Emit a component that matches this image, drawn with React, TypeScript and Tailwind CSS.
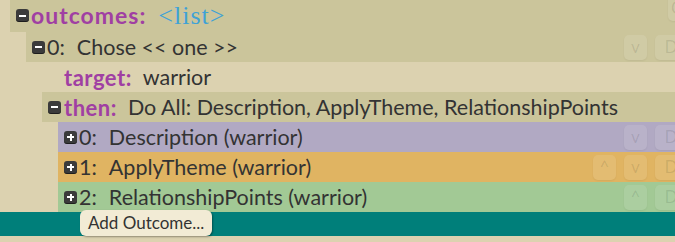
import type { ReactNode } from 'react';

function Toggle({ open }: { open: boolean }) {
  return (
    <span className="relative flex h-[13px] w-[13px] shrink-0 items-center justify-center rounded-[3px] bg-[#3b3b3b] shadow-[inset_0_-1px_0_rgba(0,0,0,0.5)]">
      <span className="absolute h-[2px] w-[7px] bg-white" />
      {!open && <span className="absolute h-[7px] w-[2px] bg-white" />}
    </span>
  );
}

function Btn({ children, className = '' }: { children: ReactNode; className?: string }) {
  return (
    <span
      className={`flex h-[25px] items-center justify-center rounded-[5px] bg-white/10 text-[17px] text-black/10 shadow-[0_1px_2px_rgba(0,0,0,0.06)] ${className}`}
    >
      {children}
    </span>
  );
}

function Row({
  bg = '',
  icon,
  label,
  bold = false,
  value,
  buttons,
}: {
  bg?: string;
  icon?: boolean | null;
  label: string;
  bold?: boolean;
  value?: ReactNode;
  buttons?: ReactNode;
}) {
  return (
    <div className={`flex h-[30px] items-center pl-[6px] ${bg}`}>
      {icon === null ? <span className="w-[13px] shrink-0" /> : <Toggle open={!!icon} />}
      <span
        className={`w-max shrink-0 ${
          bold
            ? 'ml-[3px] text-[22px] font-bold tracking-[0.5px] text-[#a03fa3]'
            : 'ml-[2px] text-[#333]'
        }`}
      >
        {label}
      </span>
      <span className={`whitespace-nowrap ${bold ? 'ml-[11px]' : 'ml-[12px]'}`}>{value}</span>
      <div className="ml-auto flex shrink-0 items-center gap-[8px]">{buttons}</div>
    </div>
  );
}

export default function App() {
  return (
    <div className="h-[242px] w-[675px] overflow-hidden bg-[#dcd2b0] font-['Lato',sans-serif] text-[21.5px] text-[#333]">
      <div className="w-[700px]">
        <div className="ml-[10px]">
          {/* outcomes header */}
          <div className="flex h-[32px] items-start bg-[#cbc59b] pl-[6px]">
            <div className="mt-[9px] flex items-center">
              <Toggle open />
            </div>
            <span className="ml-[2px] mt-[-2px] text-[23px] font-bold tracking-[1px] text-[#a03fa3]">
              outcomes:
            </span>
            <span className="ml-[12px] mt-[-4px] font-['Liberation_Serif',serif] text-[26px] tracking-[1px] text-[#3fa2d6]">
              &lt;list&gt;
            </span>
            <div className="ml-auto mr-[-13px] mt-[-6px] flex">
              <Btn className="h-[27px] w-[45px]">Copy</Btn>
            </div>
          </div>

          <div className="ml-[16px]">
            <Row
              bg="bg-[#cbc59b]"
              icon
              label="0:"
              value="Chose << one >>"
              buttons={
                <>
                  <Btn className="w-[23px]">v</Btn>
                  <Btn className="w-[45px]">Del</Btn>
                </>
              }
            />
            <div className="ml-[16px]">
              <Row icon={null} label="target:" bold value="warrior" />
              <Row
                bg="bg-[#cbc59b]"
                icon
                label="then:"
                bold
                value="Do All: Description, ApplyTheme, RelationshipPoints"
              />
              <div className="ml-[16px]">
                <Row
                  bg="bg-[#b1a9c3]"
                  icon={false}
                  label="0:"
                  value="Description (warrior)"
                  buttons={
                    <>
                      <Btn className="w-[23px]">v</Btn>
                      <Btn className="w-[45px]">Del</Btn>
                    </>
                  }
                />
                <Row
                  bg="bg-[#e0b462]"
                  icon={false}
                  label="1:"
                  value="ApplyTheme (warrior)"
                  buttons={
                    <>
                      <Btn className="w-[23px]">^</Btn>
                      <Btn className="w-[23px]">v</Btn>
                      <Btn className="w-[45px]">Del</Btn>
                    </>
                  }
                />
                <Row
                  bg="bg-[#a2c995]"
                  icon={false}
                  label="2:"
                  value="RelationshipPoints (warrior)"
                  buttons={
                    <>
                      <Btn className="w-[23px]">^</Btn>
                      <Btn className="w-[45px]">Del</Btn>
                    </>
                  }
                />
              </div>
            </div>
          </div>
        </div>

        {/* add bar */}
        <div className="flex h-[24px] items-center bg-[#007f7a] pl-[80px]">
          <button className="mt-[-2px] flex h-[26px] items-center rounded-[6px] bg-[#f2ebd5] px-[8px] text-[17px] text-[#333] shadow-[1px_1px_2px_rgba(0,0,0,0.35)]">
            Add Outcome...
          </button>
        </div>

        <div className="flex h-[30px] items-start pl-[84px] pt-[4px] leading-none">
          <span className="text-[22px] font-bold tracking-[0.5px] text-[#a03fa3]">label:</span>
          <span className="ml-[40px]">Do All</span>
        </div>
      </div>
    </div>
  );
}
